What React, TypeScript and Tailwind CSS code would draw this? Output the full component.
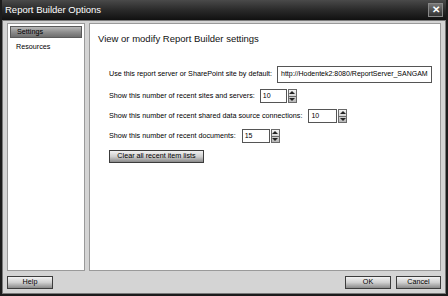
import { useState } from "react";

function Spinner() {
  return (
    <div className="flex flex-col w-[9px] h-[14px] ml-[1px] border border-[#6a6a6a] bg-gradient-to-b from-[#f4f4f4] to-[#b8b8b8]">
      <div className="flex-1 flex items-center justify-center border-b border-[#6a6a6a]">
        <div className="w-0 h-0 border-l-[3px] border-r-[3px] border-b-[3px] border-l-transparent border-r-transparent border-b-[#222]" />
      </div>
      <div className="flex-1 flex items-center justify-center">
        <div className="w-0 h-0 border-l-[3px] border-r-[3px] border-t-[3px] border-l-transparent border-r-transparent border-t-[#222]" />
      </div>
    </div>
  );
}

function NumberBox({ value, width }: { value: string; width: string }) {
  return (
    <div className="flex items-center">
      <div
        className={`${width} h-[14px] border border-[#555] bg-white pl-[2px] text-[7px] leading-[12px] text-black`}
      >
        {value}
      </div>
      <Spinner />
    </div>
  );
}

function DlgButton({ label, className }: { label: string; className?: string }) {
  return (
    <div
      className={`h-[13px] border border-[#3c3c3c] bg-gradient-to-b from-[#f2f2f2] via-[#cfcfcf] to-[#8a8a8a] flex items-center justify-center text-[7.2px] whitespace-nowrap text-black ${className ?? ""}`}
    >
      {label}
    </div>
  );
}

export default function App() {
  const [selected, setSelected] = useState("Settings");
  const items = ["Settings", "Resources"];

  return (
    <div
      className="w-[448px] h-[296px] flex flex-col bg-[#1c1c1c] p-[2px] pt-0 overflow-hidden"
      style={{ fontFamily: "'Liberation Sans', Arial, sans-serif" }}
    >
      {/* title bar */}
      <div className="h-[20px] flex items-center justify-between pl-[3px] pr-[3px] bg-gradient-to-b from-[#4a4a4a] via-[#2a2a2a] to-[#111]">
        <span className="text-white text-[9.5px]">Report Builder Options</span>
        <div className="w-[15px] h-[14px] border border-[#888] bg-gradient-to-b from-[#777] to-[#333] flex items-center justify-center text-white text-[10px] leading-none font-bold">
          ✕
        </div>
      </div>

      <div className="flex-1 flex flex-col bg-[#d4d4d4] border border-[#7a7a7a] px-[4px] pt-[2px] pb-[4px]">
        <div className="flex-1 flex gap-[4px]">
          {/* left nav */}
          <div className="w-[78px] bg-white border border-[#9a9a9a] p-[2px] flex flex-col gap-[3px]">
            {items.map((it) => (
              <div
                key={it}
                onClick={() => setSelected(it)}
                className={`h-[12px] pl-[6px] flex items-center text-[7.2px] text-black ${
                  selected === it
                    ? "bg-gradient-to-b from-[#b8b8b8] via-[#8e8e8e] to-[#6e6e6e] border border-[#5a5a5a]"
                    : ""
                }`}
              >
                {it}
              </div>
            ))}
          </div>

          {/* right panel */}
          <div className="flex-1 bg-white border border-[#9a9a9a] pl-[8px] pt-[9px]">
            <div className="text-[9.5px] leading-[12px] text-[#111]">View or modify Report Builder settings</div>

            <div className="mt-[21px] pl-[11px] flex flex-col gap-[6px] text-[7.2px] text-black whitespace-nowrap">
              <div className="flex items-center">
                <span>Use this report server or SharePoint site by default:</span>
                <div className="ml-[5px] w-[155px] h-[17px] border border-[#555] bg-white pl-[3px] flex items-center text-[7px] overflow-hidden">
                  http://Hodentek2:8080/ReportServer_SANGAM
                </div>
              </div>
              <div className="flex items-center">
                <span>Show this number of recent sites and servers:</span>
                <div className="ml-[5px]">
                  <NumberBox value="10" width="w-[27px]" />
                </div>
              </div>
              <div className="flex items-center">
                <span>Show this number of recent shared data source connections:</span>
                <div className="ml-[6px]">
                  <NumberBox value="10" width="w-[29px]" />
                </div>
              </div>
              <div className="flex items-center">
                <span>Show this number of recent documents:</span>
                <div className="ml-[6px]">
                  <NumberBox value="15" width="w-[28px]" />
                </div>
              </div>
              <div className="flex mt-[1px]">
                <DlgButton label="Clear all recent item lists" className="w-[95px]" />
              </div>
            </div>
          </div>
        </div>

        {/* footer */}
        <div className="h-[13px] mt-[5px] flex items-center justify-between">
          <DlgButton label="Help" className="w-[46px]" />
          <div className="flex gap-[5px]">
            <DlgButton label="OK" className="w-[46px]" />
            <DlgButton label="Cancel" className="w-[45px]" />
          </div>
        </div>
      </div>
    </div>
  );
}
